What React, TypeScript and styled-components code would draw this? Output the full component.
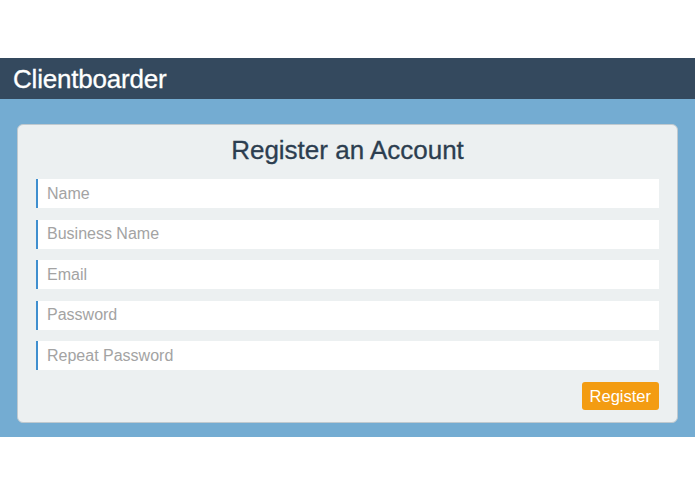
import React from "react";
import styled, { createGlobalStyle } from "styled-components";

const Global = createGlobalStyle`
  html, body { margin: 0; padding: 0; background: #ffffff; }
  body { font-family: "Liberation Sans", Arial, sans-serif; }
  * { box-sizing: border-box; }
`;

const Page = styled.div`
  padding-top: 58px;
  display: flex;
  flex-direction: column;
`;

const Header = styled.header`
  height: 41px;
  background: #34495e;
  display: flex;
  align-items: center;
  padding-left: 13px;
`;

const Brand = styled.div`
  color: #ffffff;
  font-size: 26px;
  line-height: 1;
  letter-spacing: -0.2px;
  -webkit-text-stroke: 0.3px #ffffff;
`;

const Main = styled.main`
  background: #74acd2;
  padding: 25px 17px 14px 17px;
`;

const Card = styled.form`
  background: #ecf0f1;
  border: 1px solid #bfc9cf;
  border-radius: 6px;
  padding: 10px 18px 12px 18px;
  display: flex;
  flex-direction: column;
`;

const Title = styled.h1`
  margin: 0 0 14px 0;
  text-align: center;
  font-weight: normal;
  font-size: 26px;
  line-height: 30px;
  color: #2c3e50;
  -webkit-text-stroke: 0.3px #2c3e50;
`;

const Fields = styled.div`
  display: flex;
  flex-direction: column;
  gap: 11.5px;
`;

const Input = styled.input`
  height: 29px;
  width: 100%;
  border: none;
  border-left: 2px solid #3f8fcf;
  background: #ffffff;
  padding: 0 0 0 9px;
  font-family: "Liberation Sans", Arial, sans-serif;
  font-size: 16px;
  color: #2c3e50;
  outline: none;
  &::placeholder { color: #a3a3a3; }
`;

const Actions = styled.div`
  display: flex;
  justify-content: flex-end;
  margin-top: 12px;
`;

const Button = styled.button`
  height: 28px;
  padding: 0 8px;
  border: none;
  border-radius: 3px;
  background: #f39c12;
  color: #ffffff;
  font-family: "Liberation Sans", Arial, sans-serif;
  font-size: 16.5px;
  cursor: pointer;
`;

const Footer = styled.div`
  height: 57px;
  background: #ffffff;
`;

const fields = [
  { name: "name", placeholder: "Name", type: "text" },
  { name: "business", placeholder: "Business Name", type: "text" },
  { name: "email", placeholder: "Email", type: "email" },
  { name: "password", placeholder: "Password", type: "password" },
  { name: "repeat", placeholder: "Repeat Password", type: "password" },
];

export default function App() {
  return (
    <>
      <Global />
      <Page>
        <Header>
          <Brand>Clientboarder</Brand>
        </Header>
        <Main>
          <Card onSubmit={(e) => e.preventDefault()}>
            <Title>Register an Account</Title>
            <Fields>
              {fields.map((f) => (
                <Input key={f.name} name={f.name} type={f.type} placeholder={f.placeholder} />
              ))}
            </Fields>
            <Actions>
              <Button type="submit">Register</Button>
            </Actions>
          </Card>
        </Main>
        <Footer />
      </Page>
    </>
  );
}
